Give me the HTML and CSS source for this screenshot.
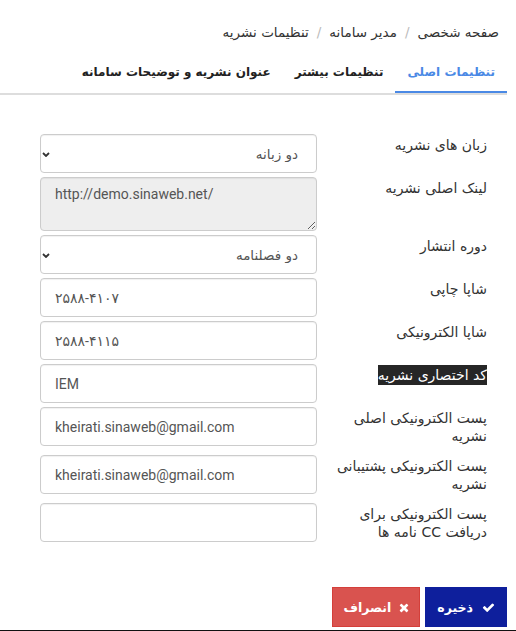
FILE: index.html
```html
<!DOCTYPE html>
<html lang="fa" dir="rtl">
<head>
<meta charset="utf-8">
<title>تنظیمات نشریه</title>
<link rel="stylesheet" href="styles.css">
</head>
<body>
<div class="page">
  <ol class="breadcrumb">
    <li>صفحه شخصی</li>
    <li class="sep">/</li>
    <li>مدیر سامانه</li>
    <li class="sep">/</li>
    <li>تنظیمات نشریه</li>
  </ol>

  <ul class="tabs">
    <li class="tab active">تنظیمات اصلی</li>
    <li class="tab">تنظیمات بیشتر</li>
    <li class="tab">عنوان نشریه و توضیحات سامانه</li>
  </ul>

  <form class="form">
    <div class="row">
      <label class="label">زبان های نشریه</label>
      <div class="control select-wrap">
        <select class="field select"><option>دو زبانه</option></select>
        <svg class="chev" width="8" height="5" viewBox="0 0 8 5"><path d="M1 1l3 3 3-3" fill="none" stroke="#333" stroke-width="1.8"/></svg>
      </div>
    </div>
    <div class="row">
      <label class="label">لینک اصلی نشریه</label>
      <div class="control">
        <textarea class="field area ltr" readonly>http://demo.sinaweb.net/</textarea>
      </div>
    </div>
    <div class="row">
      <label class="label">دوره انتشار</label>
      <div class="control select-wrap">
        <select class="field select"><option>دو فصلنامه</option></select>
        <svg class="chev" width="8" height="5" viewBox="0 0 8 5"><path d="M1 1l3 3 3-3" fill="none" stroke="#333" stroke-width="1.8"/></svg>
      </div>
    </div>
    <div class="row">
      <label class="label">شاپا چاپی</label>
      <div class="control"><input class="field ltr" value="۲۵۸۸-۴۱۰۷"></div>
    </div>
    <div class="row">
      <label class="label">شاپا الکترونیکی</label>
      <div class="control"><input class="field ltr" value="۲۵۸۸-۴۱۱۵"></div>
    </div>
    <div class="row">
      <label class="label"><span class="mark">کد اختصاری نشریه</span></label>
      <div class="control"><input class="field ltr" value="IEM"></div>
    </div>
    <div class="row">
      <label class="label">پست الکترونیکی اصلی<br>نشریه</label>
      <div class="control"><input class="field ltr" value="kheirati.sinaweb@gmail.com"></div>
    </div>
    <div class="row">
      <label class="label">پست الکترونیکی پشتیبانی<br>نشریه</label>
      <div class="control"><input class="field ltr" value="kheirati.sinaweb@gmail.com"></div>
    </div>
    <div class="row">
      <label class="label">پست الکترونیکی برای<br>دریافت CC نامه ها</label>
      <div class="control"><input class="field ltr" value=""></div>
    </div>
  </form>

  <div class="actions">
    <button class="btn btn-save" type="button">
      <svg class="ico" width="13" height="13" viewBox="0 0 1792 1792"><path fill="#fff" d="M1671 566q0 40-28 68l-724 724-136 136q-28 28-68 28t-68-28l-136-136-362-362q-28-28-28-68t28-68l136-136q28-28 68-28t68 28l294 295 656-657q28-28 68-28t68 28l136 136q28 28 28 68z"/></svg>
      <span>ذخیره</span>
    </button>
    <button class="btn btn-cancel" type="button">
      <svg class="ico" width="10" height="13" viewBox="0 0 1408 1792"><path fill="#fff" d="M1298 1322q0 40-28 68l-136 136q-28 28-68 28t-68-28l-294-294-294 294q-28 28-68 28t-68-28l-136-136q-28-28-28-68t28-68l294-294-294-294q-28-28-28-68t28-68l136-136q28-28 68-28t68 28l294 294 294-294q28-28 68-28t68 28l136 136q28 28 28 68t-28 68l-294 294 294 294q28 28 28 68z"/></svg>
      <span>انصراف</span>
    </button>
  </div>
</div>
<div class="bottom-bar"></div>
</body>
</html>
```

FILE: styles.css
```css
html, body {
  margin: 0;
  padding: 0;
  height: 631px;
  overflow: hidden;
  background: #fff;
}
body {
  font-family: "DejaVu Sans", Roboto, sans-serif;
  font-size: 14px;
  color: #333;
}
.page {
  width: 507px;
  margin: 0 auto 0 0;
}
.breadcrumb {
  list-style: none;
  margin: 0 0 10px 0;
  padding: 22px 8px 0 0;
  display: flex;
  line-height: 20px;
  font-size: 13.5px;
  color: #333;
}
.breadcrumb .sep {
  color: #bbb;
  padding: 0 8px;
}
.tabs {
  list-style: none;
  margin: 0;
  padding: 0;
  display: flex;
  border-bottom: 2px solid #ddd;
}
.tab {
  padding: 10px 12px 9px;
  line-height: 20px;
  font-weight: bold;
  font-size: 12px;
  color: #222;
  border-bottom: 2px solid transparent;
}
.tab.active {
  color: #4a89e5;
  border-bottom-color: #4a89e5;
}
.form {
  margin-top: 39px;
  padding: 0 20px 0 40px;
}
.row {
  display: flex;
  gap: 10px;
  margin-bottom: 4px;
}
.label {
  width: 160px;
  flex: none;
  padding: 2px 0 6px;
  line-height: 18px;
  font-size: 14px;
  color: #333;
  white-space: nowrap;
}
.mark {
  background: #262626;
  color: #fff;
  padding: 2px 0;
}
.control {
  flex: 1;
  position: relative;
}
.field {
  display: block;
  box-sizing: border-box;
  width: 100%;
  height: 39px;
  margin: 0;
  border: 1px solid #ccc;
  border-radius: 4px;
  background: #fff;
  color: #555;
  font-family: Roboto, "DejaVu Sans", sans-serif;
  font-size: 14px;
  padding: 0 14px;
  box-shadow: inset 0 1px 1px rgba(0,0,0,0.06);
  outline: none;
}
.ltr {
  direction: ltr;
  text-align: left;
}
.select {
  appearance: none;
  -webkit-appearance: none;
  font-family: "DejaVu Sans", sans-serif;
  font-size: 13.5px;
  padding: 0 18px 0 24px;
}
.chev {
  position: absolute;
  left: 2px;
  top: 18px;
}
.area {
  height: 54px;
  padding: 6px 14px;
  line-height: 20px;
  background: #eee;
  resize: vertical;
}
.actions {
  display: flex;
  gap: 5px;
  margin-top: 40px;
}
.btn {
  display: flex;
  align-items: center;
  gap: 9px;
  height: 40px;
  padding: 0 11px;
  border: 1px solid transparent;
  border-radius: 0;
  color: #fff;
  font-family: "DejaVu Sans", sans-serif;
  font-weight: bold;
  font-size: 12.5px;
  cursor: pointer;
}
.btn-save {
  background: #0e1f9c;
  border-color: #0e1f9c;
}
.btn-cancel {
  background: #d9534f;
  border-color: #d43f3a;
  padding: 0 10px;
  gap: 8px;
}
.ico {
  display: block;
  flex: none;
}
.bottom-bar {
  height: 3px;
  margin-top: 3px;
  background: #111;
}
```
